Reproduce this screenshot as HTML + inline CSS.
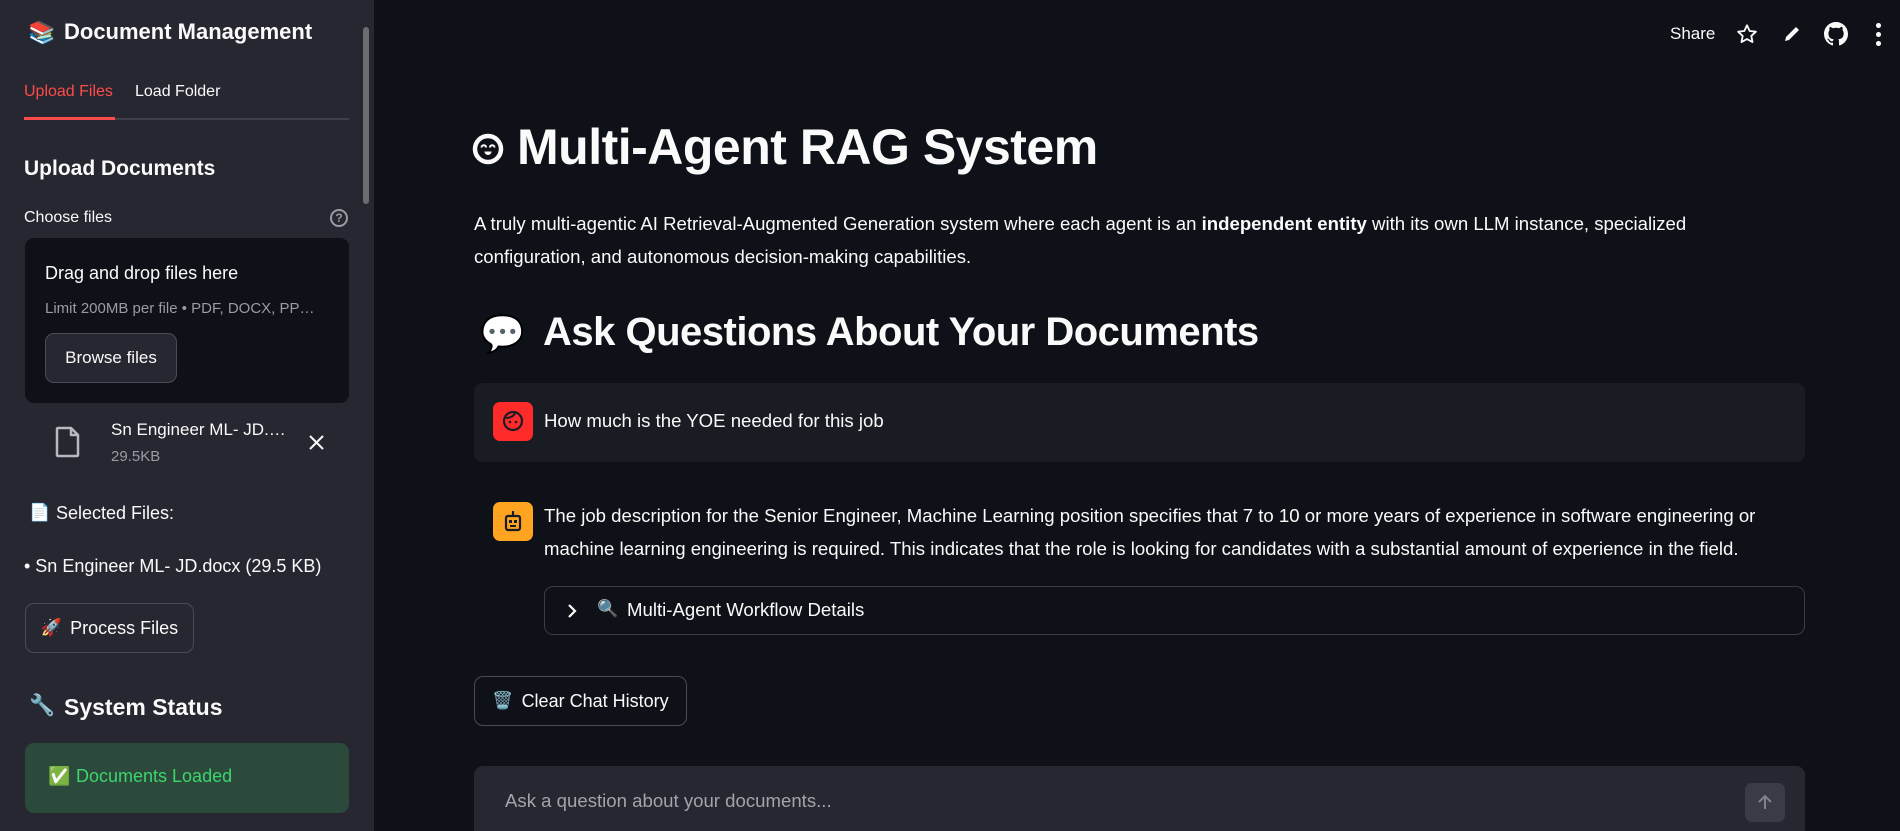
<!DOCTYPE html>
<html><head><meta charset="utf-8">
<style>
*{box-sizing:border-box;margin:0;padding:0}
html,body{width:1900px;height:831px;overflow:hidden;background:#0e1117;font-family:"Liberation Sans",sans-serif;color:#fafafa;position:relative}
.abs{position:absolute;white-space:nowrap}
#side{position:absolute;left:0;top:0;width:374px;height:831px;background:#262730}
.btn{position:absolute;border:1px solid #4a4b55;border-radius:9px;display:flex;align-items:center;justify-content:center;font-size:18px;color:#fafafa}
</style></head><body>
<div id="side">
  <div class="abs" style="left:28px;top:20px;font-size:22px">📚</div>
  <div class="abs" style="left:64px;top:19px;font-size:22px;font-weight:bold">Document Management</div>
  <div class="abs" style="left:24px;top:83px;font-size:16px;color:#ff4b4b">Upload Files</div>
  <div class="abs" style="left:135px;top:83px;font-size:16px">Load Folder</div>
  <div class="abs" style="left:24px;top:118px;width:325px;height:2px;background:#3d3f4b"></div>
  <div class="abs" style="left:24px;top:117px;width:91px;height:3px;background:#ff4b4b"></div>
  <div class="abs" style="left:24px;top:157px;font-size:21px;font-weight:bold">Upload Documents</div>
  <div class="abs" style="left:24px;top:209px;font-size:16px">Choose files</div>
  <div class="abs" style="left:330px;top:209px;width:18px;height:18px;border:2px solid #9a9ba3;border-radius:50%;font-size:12px;color:#9a9ba3;text-align:center;line-height:14px;font-weight:bold">?</div>
  <div class="abs" style="left:25px;top:238px;width:324px;height:165px;background:#0e1117;border-radius:9px"></div>
  <div class="abs" style="left:45px;top:263px;font-size:18px">Drag and drop files here</div>
  <div class="abs" style="left:45px;top:300px;font-size:15px;color:#9a9ba3">Limit 200MB per file • PDF, DOCX, PP…</div>
  <div class="btn" style="left:45px;top:333px;width:132px;height:50px;background:#262730;font-size:17px">Browse files</div>
  <svg class="abs" style="left:55px;top:426px" width="26" height="32" viewBox="0 0 26 32"><path d="M3 2h13l7 7v20a1 1 0 0 1-1 1H3a1 1 0 0 1-1-1V3a1 1 0 0 1 1-1z M16 2v7h7" fill="none" stroke="#b8b9bf" stroke-width="2.5" stroke-linejoin="round"/></svg>
  <div class="abs" style="left:111px;top:420px;font-size:17px">Sn Engineer ML- JD.…</div>
  <div class="abs" style="left:111px;top:448px;font-size:15px;color:#9a9ba3">29.5KB</div>
  <svg class="abs" style="left:309px;top:435px" width="15" height="15" viewBox="0 0 15 15"><path d="M1 1L14 14M14 1L1 14" stroke="#fafafa" stroke-width="2"/></svg>
  <div class="abs" style="left:29px;top:503px;font-size:17px">📄</div>
  <div class="abs" style="left:56px;top:503px;font-size:18px">Selected Files:</div>
  <div class="abs" style="left:24px;top:556px;font-size:18px">• Sn Engineer ML- JD.docx (29.5 KB)</div>
  <div class="btn" style="left:25px;top:603px;width:169px;height:50px"><span style="font-size:17px;margin-right:8px">🚀</span>Process Files</div>
  <div class="abs" style="left:29px;top:694px;font-size:21px">🔧</div>
  <div class="abs" style="left:64px;top:694px;font-size:23px;font-weight:bold">System Status</div>
  <div class="abs" style="left:25px;top:743px;width:324px;height:70px;background:#2b4a3b;border-radius:9px"></div>
  <div class="abs" style="left:48px;top:766px;font-size:18px">✅</div>
  <div class="abs" style="left:76px;top:766px;font-size:18px;color:#3dd56d">Documents Loaded</div>
  <div class="abs" style="left:363px;top:27px;width:6px;height:177px;background:#6b6c72;border-radius:3px"></div>
</div>

<div class="abs" style="left:1670px;top:24px;font-size:17px">Share</div>
<svg class="abs" style="left:1736px;top:23px" width="22" height="22" viewBox="0 0 24 24"><path d="M12 2.5l2.9 6.2 6.8.8-5 4.6 1.3 6.7L12 17.5l-6 3.3 1.3-6.7-5-4.6 6.8-.8z" fill="none" stroke="#fafafa" stroke-width="2" stroke-linejoin="round"/></svg>
<svg class="abs" style="left:1782px;top:24px" width="20" height="20" viewBox="0 0 20 20"><path d="M3 17l1-4L14 3l3 3L7 16z" fill="#fafafa"/></svg>
<svg class="abs" style="left:1824px;top:22px" width="24" height="24" viewBox="0 0 16 16"><path fill="#fafafa" d="M8 0C3.58 0 0 3.58 0 8c0 3.54 2.290 6.53 5.47 7.59.4.07.55-.17.55-.38 0-.19-.01-.82-.01-1.490-2.010.37-2.530-.49-2.690-.94-.09-.23-.48-.94-.82-1.130-.28-.15-.68-.52-.01-.53.63-.01 1.080.58 1.230.82.72 1.210 1.870.87 2.330.66.07-.52.28-.87.51-1.070-1.780-.2-3.640-.89-3.640-3.950 0-.87.31-1.590.82-2.150-.08-.2-.36-1.020.08-2.120 0 0 .67-.21 2.200.82.64-.18 1.320-.27 2-.27.68 0 1.360.09 2 .27 1.530-1.040 2.200-.82 2.200-.82.44 1.100.16 1.920.08 2.120.51.56.82 1.270.82 2.150 0 3.070-1.870 3.750-3.650 3.950.29.25.54.73.54 1.480 0 1.070-.01 1.930-.01 2.200 0 .21.15.46.55.38A8.013 8.013 0 0016 8c0-4.420-3.580-8-8-8z"/></svg>
<div class="abs" style="left:1876px;top:21px;width:5px;height:26px;background:radial-gradient(circle,#fafafa 2.4px,transparent 2.6px) 0 0/5px 9px repeat-y"></div>

<svg class="abs" style="left:472px;top:133px" width="32" height="32" viewBox="0 0 32 32"><circle cx="16" cy="16" r="13" fill="#0e1117" stroke="#fafafa" stroke-width="4.5"/><path d="M9.5 14.5a2.3 2.3 0 0 1 4.6 0M17.9 14.5a2.3 2.3 0 0 1 4.6 0" fill="none" stroke="#fafafa" stroke-width="2"/><path d="M12.5 18.5h7a3.5 3.5 0 0 1-7 0z" fill="#fafafa"/></svg>
<div class="abs" style="left:517px;top:118px;font-size:50px;font-weight:bold;letter-spacing:-0.5px">Multi-Agent RAG System</div>
<div class="abs" style="left:474px;top:207px;font-size:18.6px;line-height:33px">A truly multi-agentic AI Retrieval-Augmented Generation system where each agent is an <b>independent entity</b> with its own LLM instance, specialized<br>configuration, and autonomous decision-making capabilities.</div>
<div class="abs" style="left:480px;top:313px;font-size:36px">💬</div>
<div class="abs" style="left:543px;top:310px;font-size:40px;font-weight:bold;letter-spacing:-0.5px">Ask Questions About Your Documents</div>

<div class="abs" style="left:474px;top:383px;width:1331px;height:79px;background:#1a1c24;border-radius:9px"></div>
<div class="abs" style="left:493px;top:402px;width:40px;height:39px;background:#ff2b2b;border-radius:7px"></div>
<svg class="abs" style="left:501px;top:409px" width="24" height="24" viewBox="0 0 24 24"><circle cx="12" cy="12" r="9" fill="none" stroke="#1a1c24" stroke-width="2.2"/><path d="M5 9c4 0 8-2 9-5" fill="none" stroke="#1a1c24" stroke-width="2"/><circle cx="9" cy="13" r="1.3" fill="#1a1c24"/><circle cx="15" cy="13" r="1.3" fill="#1a1c24"/></svg>
<div class="abs" style="left:544px;top:410px;font-size:18.6px">How much is the YOE needed for this job</div>

<div class="abs" style="left:493px;top:502px;width:40px;height:39px;background:#ffa421;border-radius:7px"></div>
<svg class="abs" style="left:502px;top:509px" width="22" height="24" viewBox="0 0 22 24"><rect x="4" y="7" width="14" height="14" rx="2" fill="none" stroke="#1a1c24" stroke-width="2.2"/><path d="M11 2v5" stroke="#1a1c24" stroke-width="2.2"/><rect x="7" y="11" width="3" height="3" fill="#1a1c24"/><rect x="12" y="11" width="3" height="3" fill="#1a1c24"/><path d="M8 17h6" stroke="#1a1c24" stroke-width="2"/></svg>
<div class="abs" style="left:544px;top:499px;font-size:18.6px;line-height:33px">The job description for the Senior Engineer, Machine Learning position specifies that 7 to 10 or more years of experience in software engineering or<br>machine learning engineering is required. This indicates that the role is looking for candidates with a substantial amount of experience in the field.</div>

<div class="abs" style="left:544px;top:586px;width:1261px;height:49px;border:1px solid #3a3c46;border-radius:9px"></div>
<svg class="abs" style="left:567px;top:603px" width="10" height="16" viewBox="0 0 10 16"><path d="M2 2l6 6-6 6" fill="none" stroke="#fafafa" stroke-width="2.2"/></svg>
<div class="abs" style="left:597px;top:599px;font-size:17px">🔍</div>
<div class="abs" style="left:627px;top:599px;font-size:18.6px">Multi-Agent Workflow Details</div>

<div class="btn" style="left:474px;top:676px;width:213px;height:50px"><span style="font-size:17px;margin-right:8px">🗑️</span>Clear Chat History</div>

<div class="abs" style="left:474px;top:766px;width:1331px;height:65px;background:#262730;border-radius:9px 9px 0 0"></div>
<div class="abs" style="left:505px;top:790px;font-size:18.6px;color:#a3a4ab">Ask a question about your documents...</div>
<div class="abs" style="left:1745px;top:783px;width:40px;height:39px;background:#3a3b44;border-radius:7px"></div>
<svg class="abs" style="left:1755px;top:792px" width="20" height="20" viewBox="0 0 20 20"><path d="M10 17V4M4 10l6-6 6 6" fill="none" stroke="#80818a" stroke-width="2"/></svg>
</body></html>
